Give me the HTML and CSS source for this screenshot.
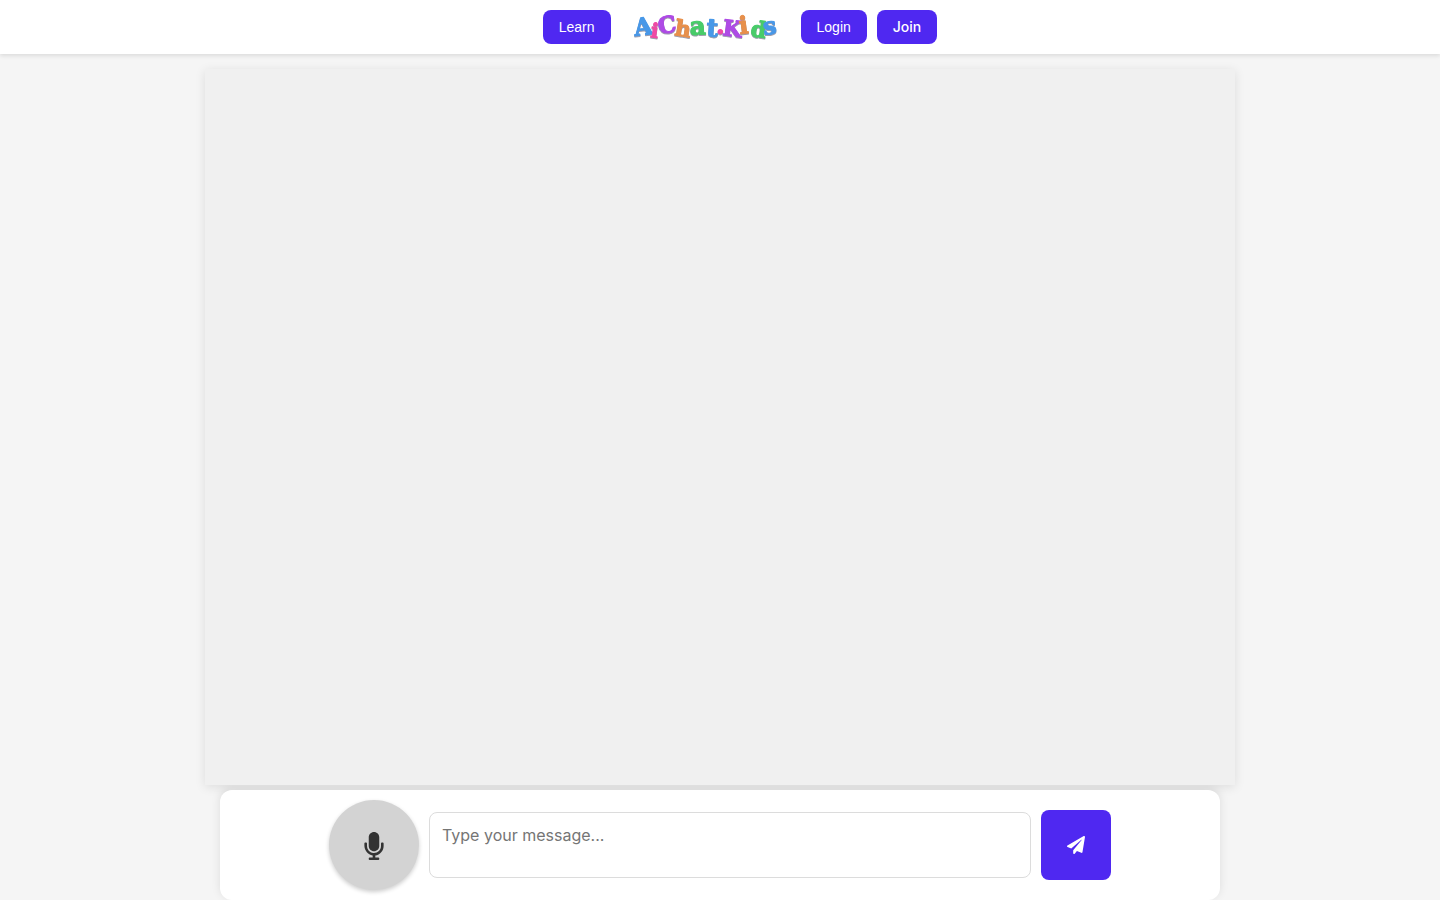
FILE: index.html
```html
<!DOCTYPE html>
<html lang="en">

<head>
    <meta charset="UTF-8">
    <meta name="viewport" content="width=device-width, initial-scale=1.0">
    <title>AiChat.Kids</title>
    <link rel="stylesheet" href="styles.css">
</head>

<body>
    <header class="header">
        <button type="button" class="nav-button">Learn</button>
        <a href="#" class="logo" aria-label="AiChat.Kids">
            <svg width="170" height="34" viewBox="0 0 170 34">
                <g class="logo-letters">
                    <text class="blue" transform="translate(14 26) rotate(-7)" font-size="24">A</text>
                    <text class="pink" transform="translate(29 27) rotate(8)" font-size="20">i</text>
                    <text class="purple" transform="translate(38 24) rotate(-8)" font-size="23">C</text>
                    <text class="orange" transform="translate(53 25) rotate(9)" font-size="22">h</text>
                    <text class="green" transform="translate(69 25) rotate(-3)" font-size="25">a</text>
                    <text class="blue" transform="translate(85 26) rotate(4)" font-size="25">t</text>
                    <text class="pink" transform="translate(95 24)" font-size="25">.</text>
                    <text class="purple" transform="translate(101 25) rotate(7)" font-size="22">K</text>
                    <text class="orange" transform="translate(119 24) rotate(-7)" font-size="24">i</text>
                    <text class="green" transform="translate(129 26) rotate(8)" font-size="22">d</text>
                    <text class="blue" transform="translate(143 25) rotate(-8)" font-size="24">s</text>
                </g>
            </svg>
        </a>
        <button type="button" class="nav-button">Login</button>
        <button type="button" class="nav-button join-button">Join</button>
    </header>

    <main class="chat">
        <div class="messages" id="messages"></div>
    </main>

    <form class="composer">
        <button type="button" class="mic-button" aria-label="Speak">
            <svg width="20" height="28" viewBox="0 0 352 512">
                <path fill="#333" d="M176 352c53.020 0 96-42.980 96-96V96c0-53.020-42.980-96-96-96S80 42.980 80 96v160c0 53.020 42.980 96 96 96zm160-160h-16c-8.840 0-16 7.160-16 16v48c0 74.800-64.490 134.820-140.790 127.380C96.710 376.890 48 317.110 48 250.300V208c0-8.840-7.160-16-16-16H16c-8.840 0-16 7.160-16 16v40.160c0 89.640 63.970 169.550 152 181.690V464H96c-8.840 0-16 7.160-16 16v16c0 8.840 7.160 16 16 16h160c8.840 0 16-7.160 16-16v-16c0-8.840-7.160-16-16-16h-56v-33.770C285.710 418.470 352 344.900 352 256v-48c0-8.840-7.160-16-16-16z" />
            </svg>
        </button>
        <textarea class="message-input" placeholder="Type your message..." aria-label="Message"></textarea>
        <button type="submit" class="send-button" aria-label="Send">
            <svg width="18" height="18" viewBox="0 0 512 512">
                <path fill="#fff" d="M476 3.200L12.500 270.600c-18.100 10.400-15.800 35.600 2.200 43.200L121 358.400l287.300-253.200c5.500-4.900 13.300 2.600 8.600 8.300L176 407v80.500c0 23.600 28.500 32.900 42.500 15.800L282 426l124.600 52.200c14.200 6 30.400-2.900 33-18.200l72-432C515 7.800 493.300-6.800 476 3.200z" />
            </svg>
        </button>
    </form>
</body>

</html>
```
FILE: styles.css
```css
* {
    box-sizing: border-box;
}

body {
    font-family: Inter, sans-serif;
    margin: 0;
    height: 100vh;
    display: flex;
    flex-direction: column;
    align-items: center;
    background-color: #f5f5f5;
    color: #333;
}

button {
    border: none;
    padding: 0;
    cursor: pointer;
}

.header {
    width: 100%;
    display: flex;
    justify-content: center;
    align-items: center;
    gap: 10px;
    padding: 10px 0 10px 40px;
    background-color: #fff;
    box-shadow: 0 2px 4px rgba(0, 0, 0, 0.1);
}

.nav-button {
    height: 34px;
    padding: 0 16px;
    border-radius: 8px;
    background-color: #4f28f1;
    color: #fff;
    font-family: "Liberation Sans", Arial, sans-serif;
    font-size: 14px;
}

.join-button {
    padding-bottom: 2px;
    font-family: Inter, sans-serif;
    font-weight: 500;
}

.logo svg {
    display: block;
}

.logo-letters {
    font-family: "DejaVu Serif", serif;
    font-weight: bold;
    stroke-width: 1;
    stroke-linejoin: round;
    filter: drop-shadow(0 1px 0 rgba(60, 60, 90, 0.5));
}

.blue {
    fill: #4898e8;
    stroke: #4898e8;
}

.pink {
    fill: #f04aa4;
    stroke: #f04aa4;
}

.purple {
    fill: #ae4be5;
    stroke: #ae4be5;
}

.orange {
    fill: #e8904b;
    stroke: #e8904b;
}

.green {
    fill: #48cc69;
    stroke: #48cc69;
}

.chat {
    flex: 1;
    display: flex;
    width: 100%;
    max-width: 1030px;
    margin: 15px 0 5px;
    box-shadow: 0 2px 10px rgba(0, 0, 0, 0.1);
}

/* keeps the composer's shadow off the messages */
.messages {
    position: relative;
    z-index: 1;
    flex: 1;
    overflow-y: auto;
    background-color: #f0f0f0;
}

.composer {
    position: relative;
    width: 100%;
    max-width: 1000px;
    display: flex;
    justify-content: center;
    align-items: center;
    gap: 10px;
    padding: 10px;
    border-radius: 12px;
    background-color: #fff;
    box-shadow: 0 -2px 10px rgba(0, 0, 0, 0.1);
}

.mic-button {
    display: flex;
    justify-content: center;
    align-items: center;
    flex-shrink: 0;
    width: 90px;
    height: 90px;
    padding-top: 2px;
    border-radius: 50%;
    background-color: #d3d3d3;
    box-shadow: 0 2px 4px rgba(0, 0, 0, 0.2);
}

.message-input {
    flex: 0 1 602px;
    min-width: 0;
    height: 66px;
    padding: 12px;
    border: 1px solid #dcdcdc;
    border-radius: 8px;
    font-family: Inter, sans-serif;
    font-size: 16px;
    resize: none;
}

.message-input:focus {
    border-color: #4f28f1;
    outline: none;
}

.send-button {
    display: flex;
    justify-content: center;
    align-items: center;
    flex-shrink: 0;
    width: 70px;
    height: 70px;
    border-radius: 8px;
    background-color: #4f28f1;
}
```
